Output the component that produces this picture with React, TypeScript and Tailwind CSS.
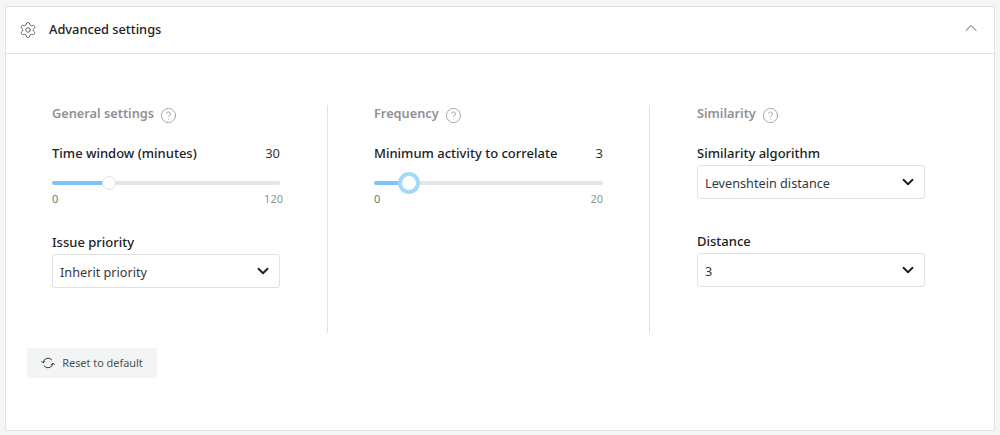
import React from 'react';
import { ChevronDown, ChevronUp, CircleHelp, Settings } from 'lucide-react';

function SectionTitle({ title }: { title: string }) {
  return (
    <div className="flex items-center gap-[6px] h-[20px] mb-[19px]">
      <span className="text-[12.75px] font-semibold text-[#8d9295] pb-[2px]">{title}</span>
      <CircleHelp className="w-[17px] h-[17px] text-[#8d9295]" strokeWidth={1.1} />
    </div>
  );
}

function Select({ label, value }: { label: string; value: string }) {
  return (
    <div>
      <div className="text-[13px] font-medium text-[#1c2124] leading-[18px] h-[21px]">{label}</div>
      <div className="h-[34px] w-[228px] border border-[#dfe1e2] rounded-[3px] bg-white flex items-center justify-between pl-[7px] pr-[7px]">
        <span className="text-[12.7px] text-[#33393c] pt-[3px]">{value}</span>
        <ChevronDown className="w-[18px] h-[18px] text-[#1c2124]" strokeWidth={2.5} />
      </div>
    </div>
  );
}

function Slider({
  label,
  value,
  max,
  percent,
  active,
  overflow,
}: {
  label: string;
  value: string;
  max: string;
  percent: number;
  active?: boolean;
  overflow?: boolean;
}) {
  return (
    <div>
      <div className="flex justify-between leading-[18px] text-[13px]">
        <span className="font-medium text-[#1c2124]">{label}</span>
        <span className="text-[#33393c]">{value}</span>
      </div>
      <div className="relative h-[4px] mt-[19px] rounded-full bg-[#e3e5e6]">
        <div className="h-full rounded-full bg-[#7cc4f4]" style={{ width: `${percent}%` }} />
        {active ? (
          <div
            className="absolute top-[-9px] ml-[-10px] w-[22px] h-[22px] rounded-full bg-white border-[4px] border-[#a5d8f7]"
            style={{ left: `${percent}%` }}
          />
        ) : (
          <div
            className="absolute top-[-5px] ml-[-7px] w-[14px] h-[14px] rounded-full bg-white border border-[#dfe1e2]"
            style={{ left: `${percent}%` }}
          />
        )}
      </div>
      <div className="flex justify-between mt-[7px] text-[11px] leading-[14px] text-[#8d9295]">
        <span className="text-[#6f7578]">0</span>
        <span className={overflow ? 'mr-[-3px]' : ''}>{max}</span>
      </div>
    </div>
  );
}

function ResetIcon() {
  return (
    <svg viewBox="0 0 14 14" className="w-[14px] h-[14px] text-[#33393c]" fill="none" stroke="currentColor" strokeWidth="1">
      <path d="M2.2 6.4A4.9 4.9 0 0 1 11 4.2" />
      <path d="M11.8 7.6A4.9 4.9 0 0 1 3 9.8" />
      <path d="M0.4 5.2 2.2 7 4 5.2" />
      <path d="M10 8.8 11.8 7 13.6 8.8" />
    </svg>
  );
}

export default function App() {
  return (
    <div
      className="h-[435px] w-[1000px] bg-[#f5f6f6] pl-[5px] pr-[5px] pt-[6px] pb-[4px]"
      style={{ fontFamily: '"Noto Sans", "Open Sans", sans-serif' }}
    >
      <div className="h-full bg-white border border-[#dfe1e2] rounded-[2px] flex flex-col">
        {/* Header */}
        <div className="h-[47px] shrink-0 border-b border-[#dfe1e2] flex items-center justify-between pl-[13px] pr-[13px]">
          <div className="flex items-center gap-[12px]">
            <Settings className="w-[18px] h-[18px] text-[#33393c]" strokeWidth={1} />
            <span className="text-[12.8px] font-medium text-[#1c2124]">Advanced settings</span>
          </div>
          <ChevronUp className="w-[20px] h-[20px] mb-[4px] text-[#33393c]" strokeWidth={1} />
        </div>

        {/* Columns */}
        <div className="flex pl-[46px] pt-[51px]">
          <div className="w-[276px] h-[228px] border-r border-[#dfe1e2] pr-[47px]">
            <SectionTitle title="General settings" />
            <Slider label="Time window (minutes)" value="30" max="120" percent={25} overflow />
            <div className="mt-[27px]">
              <Select label="Issue priority" value="Inherit priority" />
            </div>
          </div>
          <div className="w-[322px] h-[228px] border-r border-[#dfe1e2] pl-[46px] pr-[46px]">
            <SectionTitle title="Frequency" />
            <Slider label="Minimum activity to correlate" value="3" max="20" percent={15} active />
          </div>
          <div className="pl-[47px]">
            <SectionTitle title="Similarity" />
            <Select label="Similarity algorithm" value="Levenshtein distance" />
            <div className="mt-[33px]">
              <Select label="Distance" value="3" />
            </div>
          </div>
        </div>

        {/* Reset */}
        <div className="pl-[21px] mt-[15px]">
          <button className="h-[30px] w-[130px] bg-[#f3f5f5] rounded-[2px] flex items-center justify-center gap-[7px] text-[10.9px] text-[#4a5154]">
            <ResetIcon />
            Reset to default
          </button>
        </div>
      </div>
    </div>
  );
}
